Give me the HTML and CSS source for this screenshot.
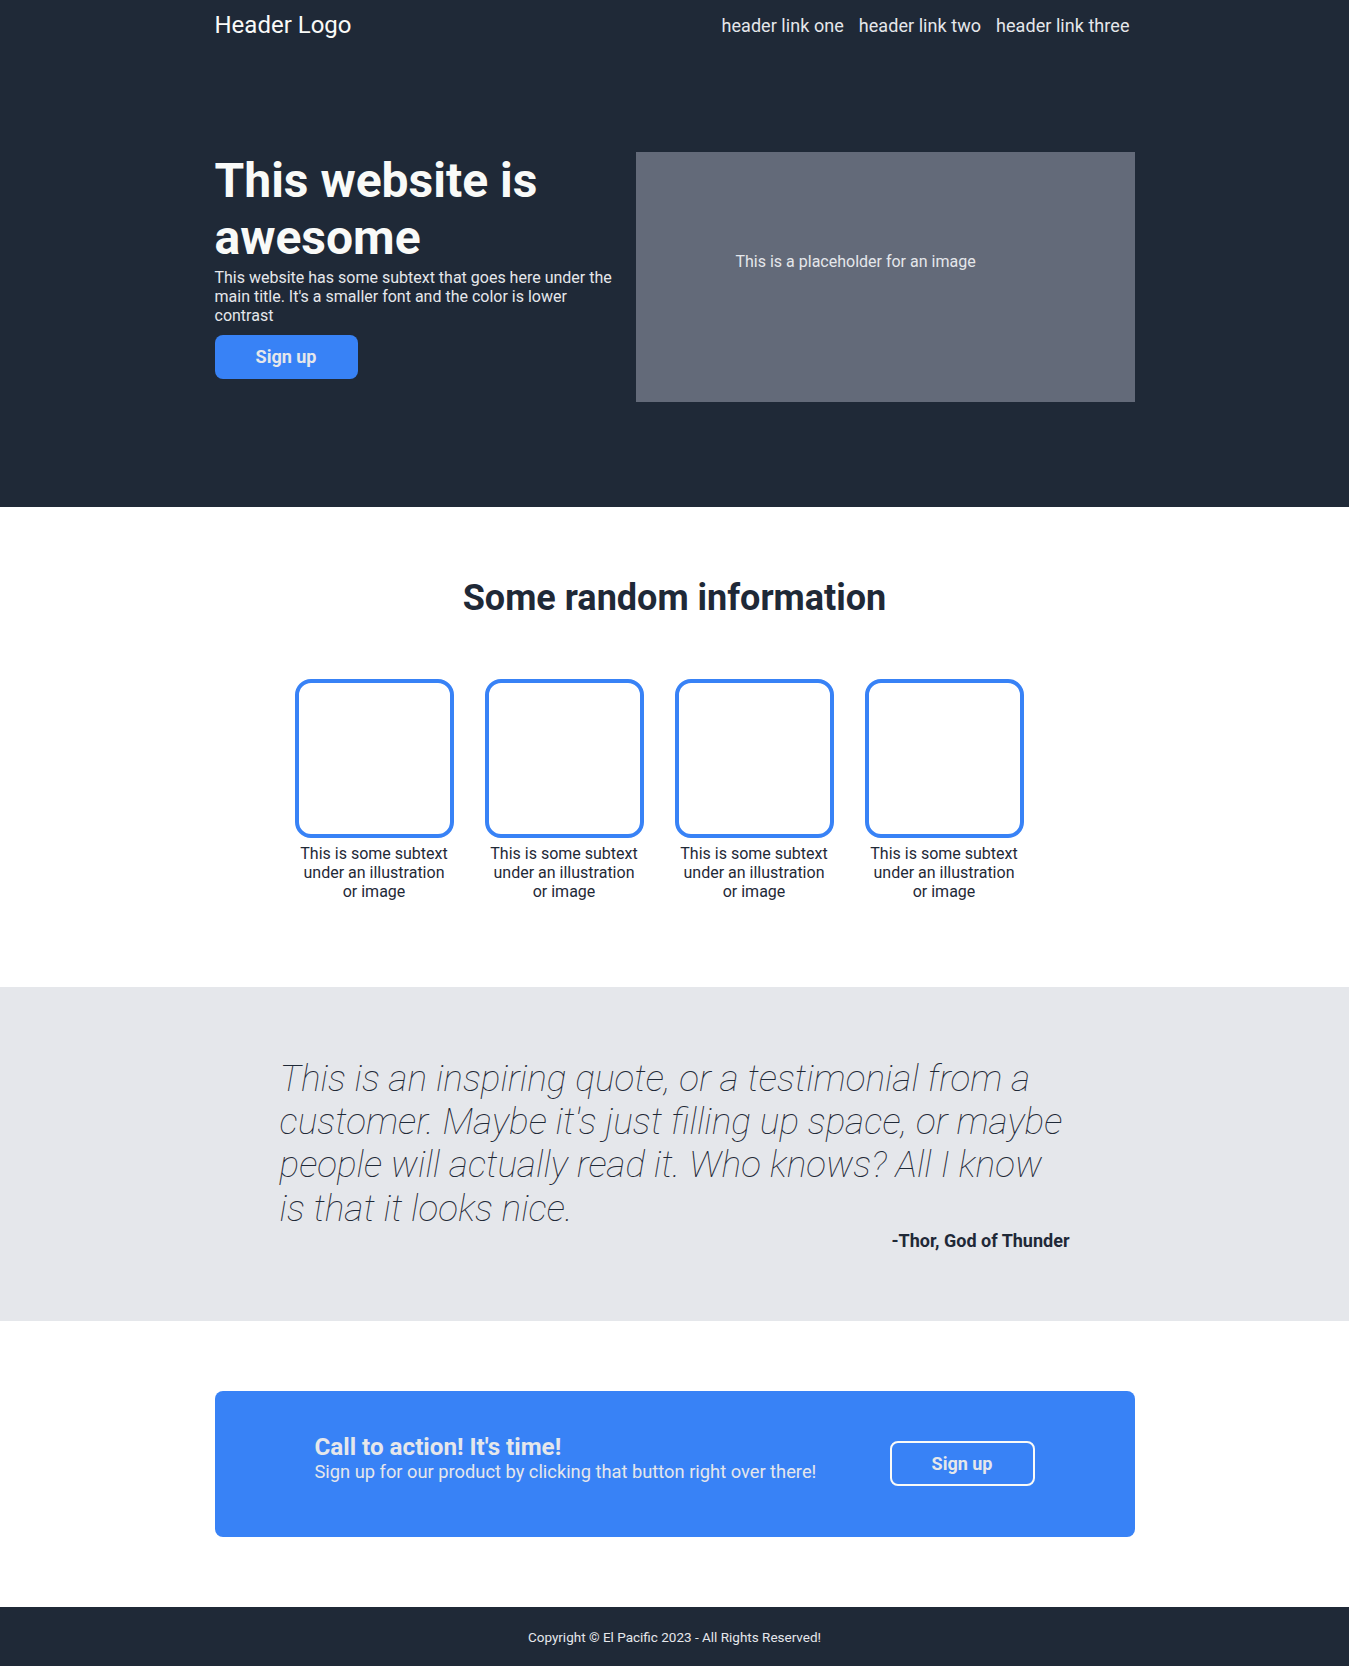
FILE: index.html
```html
<!DOCTYPE html>
<html lang="en">
<head>
<meta charset="utf-8">
<title>Landing Page</title>
<link rel="stylesheet" href="styles.css">
</head>
<body>
  <div class="top">
    <header class="container header">
      <div class="logo">Header Logo</div>
      <nav class="nav">
        <a class="nav-link" href="#">header link one</a>
        <a class="nav-link" href="#">header link two</a>
        <a class="nav-link" href="#">header link three</a>
      </nav>
    </header>
    <div class="container hero">
      <div class="hero-text">
        <h1 class="hero-title">This website is awesome</h1>
        <p class="hero-sub">This website has some subtext that goes here under the main title. It's a smaller font and the color is lower contrast</p>
        <button class="btn-primary">Sign up</button>
      </div>
      <div class="hero-image">This is a placeholder for an image</div>
    </div>
  </div>

  <section class="info">
    <h2 class="info-title">Some random information</h2>
    <div class="cards">
      <div class="card">
        <div class="card-box"></div>
        <p class="card-text">This is some subtext under an illustration or image</p>
      </div>
      <div class="card">
        <div class="card-box"></div>
        <p class="card-text">This is some subtext under an illustration or image</p>
      </div>
      <div class="card">
        <div class="card-box"></div>
        <p class="card-text">This is some subtext under an illustration or image</p>
      </div>
      <div class="card">
        <div class="card-box"></div>
        <p class="card-text">This is some subtext under an illustration or image</p>
      </div>
    </div>
  </section>

  <section class="quote-section">
    <div class="quote-wrap">
      <p class="quote">This is an inspiring quote, or a testimonial from a customer. Maybe it's just filling up space, or maybe people will actually read it. Who knows? All I know is that it looks nice.</p>
      <p class="author">-Thor, God of Thunder</p>
    </div>
  </section>

  <section class="cta-section">
    <div class="container cta">
      <div class="cta-text">
        <div class="cta-title">Call to action! It's time!</div>
        <div class="cta-sub">Sign up for our product by clicking that button right over there!</div>
      </div>
      <button class="btn-outline">Sign up</button>
    </div>
  </section>

  <footer class="footer">Copyright © El Pacific 2023 - All Rights Reserved!</footer>
</body>
</html>
```

FILE: styles.css
```css
* {
  box-sizing: border-box;
}

body {
  margin: 0;
  font-family: Roboto, "Liberation Sans", sans-serif;
  color: #1f2937;
  background: #ffffff;
}

.container {
  width: 920px;
  margin: 0 auto;
}

.top {
  background: #1f2937;
}

.header {
  height: 50px;
  display: flex;
  justify-content: space-between;
  align-items: center;
}

.logo {
  font-size: 24px;
  color: #f9faf8;
}

.nav {
  display: flex;
  gap: 15px;
  padding-right: 5px;
}

.nav-link {
  font-size: 18px;
  color: #e5e7eb;
  text-decoration: none;
  letter-spacing: 0.05px;
}

.hero {
  display: flex;
  gap: 21px;
  align-items: flex-start;
  padding: 102px 0 105px;
}

.hero-text {
  flex: 1;
}

.hero-title {
  margin: 0;
  font-size: 48px;
  font-weight: 700;
  line-height: normal;
  color: #f9faf8;
}

.hero-sub {
  margin: 2px 0 0;
  font-size: 16px;
  color: #e5e7eb;
}

.btn-primary {
  margin-top: 10px;
  font-family: inherit;
  font-size: 18px;
  font-weight: 700;
  line-height: 22px;
  color: #e5e7eb;
  background: #3882f6;
  border: none;
  border-radius: 8px;
  padding: 11px 40px;
  width: 143px;
}

.hero-image {
  flex: 0 0 499px;
  height: 250px;
  background: #636a79;
  color: #e5e7eb;
  font-size: 16px;
  padding: 100px;
}

.info {
  padding: 70px 0 86px;
}

.info-title {
  margin: 0 0 60px;
  text-align: center;
  font-size: 36px;
  font-weight: 700;
  line-height: normal;
  color: #1f2937;
}

.cards {
  display: flex;
  justify-content: center;
}

.card {
  width: 159px;
  margin-right: 31px;
}

.card-box {
  width: 159px;
  height: 159px;
  border: 4px solid #3882f6;
  border-radius: 16px;
}

.card-text {
  margin: 6px 0 0;
  text-align: center;
  font-size: 16px;
  color: #1f2937;
}

.quote-section {
  background: #e5e7eb;
  padding: 70px 0;
}

.quote-wrap {
  width: 790px;
  margin: 0 auto;
}

.quote {
  margin: 0;
  font-size: 37px;
  font-style: italic;
  font-weight: 100;
  line-height: 43.2px;
  color: #1f2937;
}

.author {
  margin: 0;
  text-align: right;
  font-size: 18px;
  font-weight: 700;
  color: #1f2937;
}

.cta-section {
  padding: 70px 0;
}

.cta {
  height: 146px;
  background: #3882f6;
  border-radius: 8px;
  padding: 0 100px;
  display: flex;
  justify-content: space-between;
  align-items: center;
}

.cta-text {
  margin-bottom: 13px;
}

.cta-title {
  font-size: 24.2px;
  font-weight: 700;
  color: #e5e7eb;
}

.cta-sub {
  font-size: 18.3px;
  color: #e5e7eb;
}

.btn-outline {
  width: 145px;
  height: 45px;
  font-family: inherit;
  font-size: 18px;
  font-weight: 700;
  color: #e5e7eb;
  background: transparent;
  border: 2px solid #f9faf8;
  border-radius: 8px;
  padding: 0;
}

.footer {
  background: #1f2937;
  height: 60px;
  display: flex;
  justify-content: center;
  align-items: center;
  font-size: 13.5px;
  color: #e5e7eb;
}
```
